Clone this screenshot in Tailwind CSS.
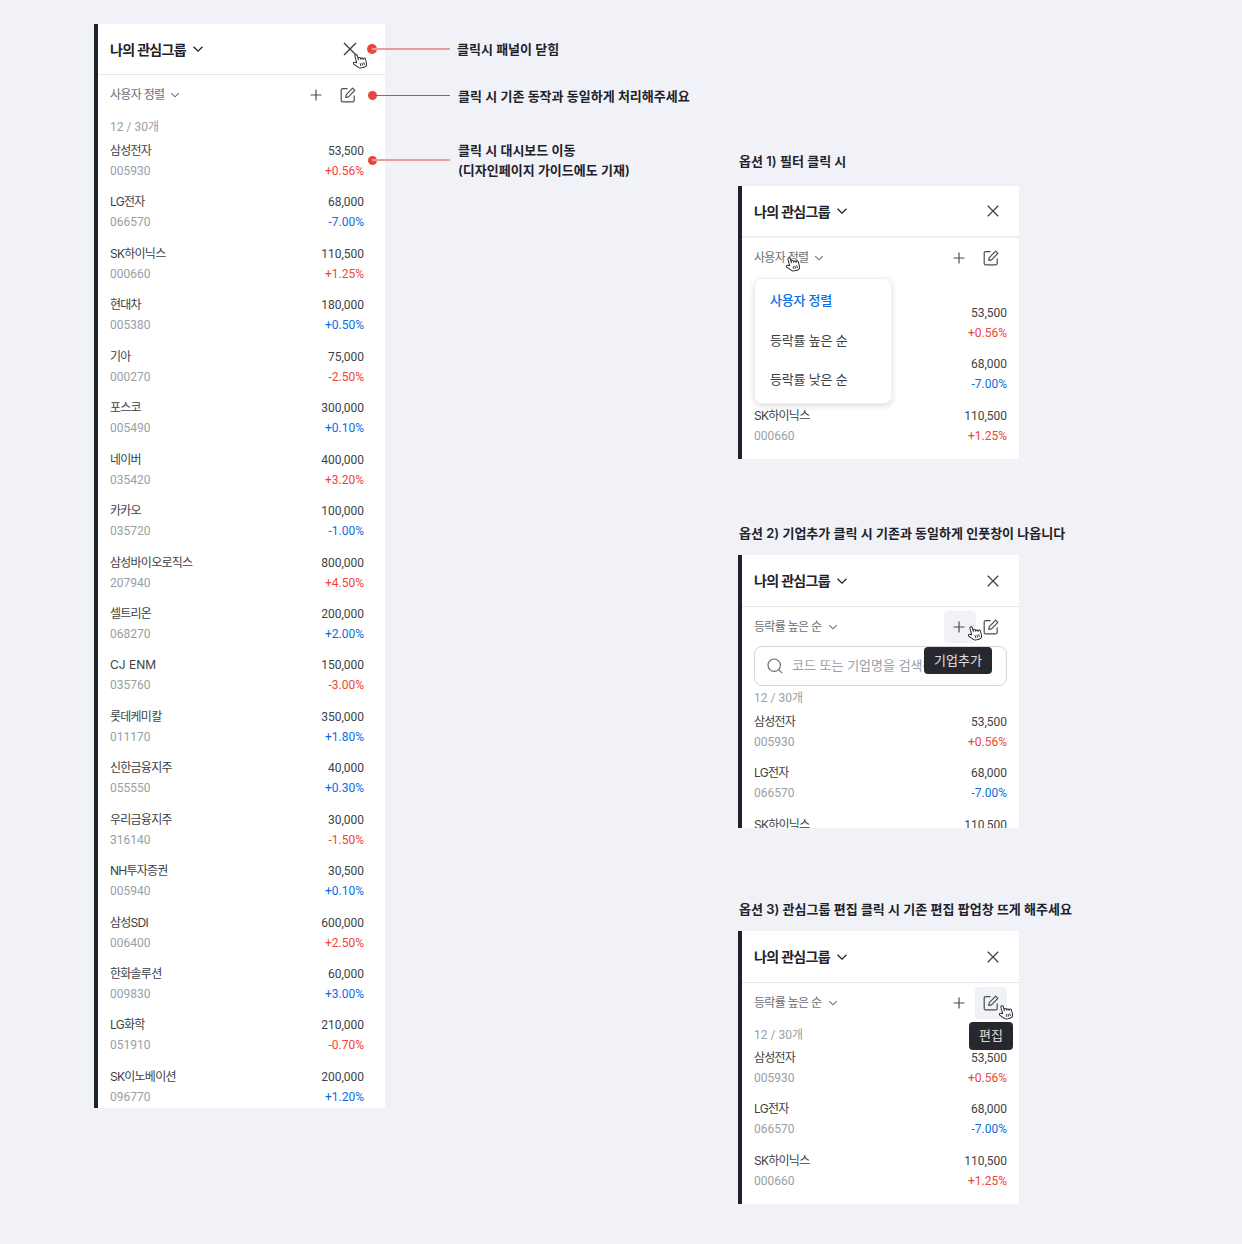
<!DOCTYPE html>
<html lang="ko">
<head>
<meta charset="UTF-8">
<title>나의 관심그룹</title>
<script src="https://cdn.jsdelivr.net/npm/@tailwindcss/browser@4"></script>
</head>
<body class="bg-[#f0f2f8] font-['Inter','Noto_Sans_CJK_KR',sans-serif] text-[#1f2229]">
<svg class="hidden">
  <symbol id="x" viewBox="0 0 16 16"><path d="M2 2L14 14M14 2L2 14" fill="none" stroke="currentColor" stroke-width="1.4"/></symbol>
  <symbol id="chev" viewBox="0 0 12 12"><path d="M1.5 3.8L6 8.2L10.5 3.8" fill="none" stroke="currentColor" stroke-width="1.3"/></symbol>
  <symbol id="plus" viewBox="0 0 12 12"><path d="M6 .5V11.5M.5 6H11.5" fill="none" stroke="currentColor" stroke-width="1.2"/></symbol>
  <symbol id="edit" viewBox="0 0 16 16"><path d="M7.5 1.7H2.4A1.2 1.2 0 0 0 1.2 2.9V13.6A1.2 1.2 0 0 0 2.4 14.8H13A1.2 1.2 0 0 0 14.2 13.6V8.5M5.8 10.3L6.3 7.6L12.6 1.2L14.8 3.4L8.5 9.8Z" fill="none" stroke="currentColor" stroke-width="1.2" stroke-linejoin="round"/></symbol>
  <symbol id="hand" viewBox="0 0 16 17"><path d="M4.6 9.5V2.4A1.3 1.3 0 0 1 7.2 2.4V7V6A1.3 1.3 0 0 1 9.8 6V7.2A1.2 1.2 0 0 1 12.2 7.2V8A1.2 1.2 0 0 1 14.6 8V12C14.6 14.6 13.2 16.2 11 16.2H8C6.6 16.2 5.8 15.6 4.8 14.4L1.2 10.2C.3 9 1.8 7.6 3 8.6Z" fill="#fff" stroke="#1f2229" stroke-width="1" stroke-linejoin="round"/><path d="M8 11V14M10 11V14M12 11V14" stroke="#1f2229" stroke-width=".9"/></symbol>
  <symbol id="search" viewBox="0 0 16 16"><circle cx="7.2" cy="7.2" r="6.2" fill="none" stroke="currentColor" stroke-width="1.2"/><path d="M11.7 11.7L15.2 15.2" stroke="currentColor" stroke-width="1.2"/></symbol>
</svg>

<div class="relative w-[1242px] h-[1244px] overflow-hidden">

  <!-- main panel -->
  <section class="absolute left-[94px] top-[24px] w-[291px] h-[1084px] bg-white border-l-4 border-[#1f2229] overflow-hidden">
    <header class="h-[51px] pl-3 pr-[27px] flex items-center justify-between border-b border-[#e4e6ec]">
      <div class="flex items-center gap-[6px]"><span class="text-[14px] font-semibold tracking-[-0.7px]">나의 관심그룹</span><svg class="size-3"><use href="#chev"/></svg></div>
      <svg class="size-4 text-[#3c3f46]"><use href="#x"/></svg>
    </header>
    <div class="h-[40px] pl-3 pr-[29px] flex items-center justify-between">
      <div class="flex items-center gap-[6px] text-[#6b6f78]"><span class="text-[12px] tracking-[-0.7px]">사용자 정렬</span><svg class="size-[10px]"><use href="#chev"/></svg></div>
      <div class="flex items-center gap-[18px] text-[#4a4d55]"><svg class="size-3"><use href="#plus"/></svg><svg class="size-4"><use href="#edit"/></svg></div>
    </div>
    <p class="pl-3 mt-[2px] h-[20px] leading-[20px] text-[12px] text-[#9a9ea6] font-['Roboto','Noto_Sans_CJK_KR',sans-serif]">12 / 30개</p>
    <ul data-rows="19" class="pl-3 pr-[21px] mt-[4px]"></ul>
  </section>

  <!-- annotations -->
  <svg class="absolute left-[352px] top-[53px] w-[15px] h-4 -rotate-[15deg]"><use href="#hand"/></svg>
  <div class="absolute left-[367px] top-[44px] w-[10px] h-[10px] rounded-full bg-[#e8473c]"></div>
  <div class="absolute left-[372px] top-[48px] w-[78px] h-[2px] bg-[#ef9b96]"></div>
  <p class="absolute left-[457px] top-[39px] leading-[20px] text-[13px] font-semibold">클릭시 패널이 닫힘</p>

  <div class="absolute left-[368px] top-[91px] w-[9px] h-[9px] rounded-full bg-[#e8473c]"></div>
  <div class="absolute left-[372px] top-[95px] w-[78px] h-px bg-[#d9483e]"></div>
  <p class="absolute left-[458px] top-[86px] leading-[20px] text-[13px] font-semibold">클릭 시 기존 동작과 동일하게 처리해주세요</p>

  <div class="absolute left-[368px] top-[156px] w-[9px] h-[9px] rounded-full bg-[#e8473c]"></div>
  <div class="absolute left-[372px] top-[159px] w-[78px] h-[2px] bg-[#ef9b96]"></div>
  <p class="absolute left-[458px] top-[140px] leading-[20px] text-[13px] font-semibold">클릭 시 대시보드 이동<br>(디자인페이지 가이드에도 기재)</p>

  <!-- option 1 -->
  <h2 class="absolute left-[739px] top-[151px] leading-[20px] text-[13px] font-semibold">옵션 1) 필터 클릭 시</h2>
  <section class="absolute left-[738px] top-[186px] w-[281px] h-[273px] bg-white border-l-4 border-[#1f2229] overflow-hidden">
    <header class="h-[52px] pl-3 pr-[19px] flex items-center justify-between border-b-2 border-[#eceef3]">
      <div class="flex items-center gap-[6px]"><span class="text-[14px] font-semibold tracking-[-0.7px]">나의 관심그룹</span><svg class="size-3"><use href="#chev"/></svg></div>
      <svg class="size-[14px] text-[#3c3f46]"><use href="#x"/></svg>
    </header>
    <div class="h-[40px] pl-3 pr-[20px] flex items-center justify-between">
      <div class="flex items-center gap-[6px] text-[#6b6f78]"><span class="text-[12px] tracking-[-0.7px]">사용자 정렬</span><svg class="size-[10px]"><use href="#chev"/></svg></div>
      <div class="flex items-center gap-[18px] text-[#4a4d55]"><svg class="size-3"><use href="#plus"/></svg><svg class="size-4"><use href="#edit"/></svg></div>
    </div>
    <p class="pl-3 mt-[5px] h-[20px] leading-[20px] text-[12px] text-[#9a9ea6] font-['Roboto','Noto_Sans_CJK_KR',sans-serif]">12 / 30개</p>
    <ul data-rows="3" class="pl-3 pr-[12px] -mt-[20px] pt-[20px]"></ul>
    <div class="absolute left-3 top-[92px] w-[138px] h-[126px] bg-white rounded-lg border border-[#f0f1f4] shadow-[0_2px_6px_rgba(0,0,0,0.14)] pl-[15px] pt-[2px] text-[13px] tracking-[-0.2px] leading-[39.5px] text-[#3c3f46]">
      <p class="text-[#0a6ee6] font-medium">사용자 정렬</p>
      <p>등락률 높은 순</p>
      <p>등락률 낮은 순</p>
    </div>
  </section>
  <svg class="absolute left-[785px] top-[256px] w-[15px] h-4 -rotate-[15deg]"><use href="#hand"/></svg>

  <!-- option 2 -->
  <h2 class="absolute left-[739px] top-[523px] leading-[20px] text-[13px] font-semibold">옵션 2) 기업추가 클릭 시 기존과 동일하게 인풋창이 나옵니다</h2>
  <section class="absolute left-[738px] top-[555px] w-[281px] h-[273px] bg-white border-l-4 border-[#1f2229] overflow-hidden">
    <header class="h-[52px] pl-3 pr-[19px] flex items-center justify-between border-b border-[#e4e6ec]">
      <div class="flex items-center gap-[6px]"><span class="text-[14px] font-semibold tracking-[-0.7px]">나의 관심그룹</span><svg class="size-3"><use href="#chev"/></svg></div>
      <svg class="size-[14px] text-[#3c3f46]"><use href="#x"/></svg>
    </header>
    <div class="h-[40px] pl-3 pr-[20px] flex items-center justify-between">
      <div class="flex items-center gap-[7px] text-[#6b6f78]"><span class="text-[12px] tracking-[-0.7px]">등락률 높은 순</span><svg class="size-[10px]"><use href="#chev"/></svg></div>
      <div class="relative flex items-center gap-[18px] text-[#4a4d55]"><span class="absolute -left-[9px] -top-[8px] size-8 rounded bg-[#f0f2f8]"></span><svg class="relative size-3"><use href="#plus"/></svg><svg class="size-4"><use href="#edit"/></svg></div>
    </div>
    <div class="mx-3 -mt-px h-[40px] flex items-center gap-[9px] pl-3 rounded-lg border border-[#d4d6dc] text-[#9a9ea6] text-[13px] overflow-hidden whitespace-nowrap"><svg class="size-4 shrink-0 text-[#6b6f78]"><use href="#search"/></svg><span>코드 또는 기업명을 검색해주세요</span></div>
    <p class="pl-3 mt-[2px] h-[20px] leading-[20px] text-[12px] text-[#9a9ea6] font-['Roboto','Noto_Sans_CJK_KR',sans-serif]">12 / 30개</p>
    <ul data-rows="3" class="pl-3 pr-[12px] mt-[4px]"></ul>
  </section>
  <div class="absolute left-[924px] top-[647px] w-[68px] h-[27px] rounded bg-[#26282e] text-white/85 text-[13px] text-center leading-[26px]">기업추가</div>
  <svg class="absolute left-[967px] top-[625px] w-[15px] h-4 -rotate-[15deg]"><use href="#hand"/></svg>

  <!-- option 3 -->
  <h2 class="absolute left-[739px] top-[899px] leading-[20px] text-[13px] font-semibold">옵션 3) 관심그룹 편집 클릭 시 기존 편집 팝업창 뜨게 해주세요</h2>
  <section class="absolute left-[738px] top-[931px] w-[281px] h-[273px] bg-white border-l-4 border-[#1f2229] overflow-hidden">
    <header class="h-[52px] pl-3 pr-[19px] flex items-center justify-between border-b border-[#e4e6ec]">
      <div class="flex items-center gap-[6px]"><span class="text-[14px] font-semibold tracking-[-0.7px]">나의 관심그룹</span><svg class="size-3"><use href="#chev"/></svg></div>
      <svg class="size-[14px] text-[#3c3f46]"><use href="#x"/></svg>
    </header>
    <div class="h-[40px] pl-3 pr-[20px] flex items-center justify-between">
      <div class="flex items-center gap-[7px] text-[#6b6f78]"><span class="text-[12px] tracking-[-0.7px]">등락률 높은 순</span><svg class="size-[10px]"><use href="#chev"/></svg></div>
      <div class="relative flex items-center gap-[18px] text-[#4a4d55]"><span class="absolute -right-[8px] -top-[8px] size-8 rounded bg-[#f0f2f8]"></span><svg class="size-3"><use href="#plus"/></svg><svg class="relative size-4"><use href="#edit"/></svg></div>
    </div>
    <p class="pl-3 mt-[2px] h-[20px] leading-[20px] text-[12px] text-[#9a9ea6] font-['Roboto','Noto_Sans_CJK_KR',sans-serif]">12 / 30개</p>
    <ul data-rows="3" class="pl-3 pr-[12px] mt-[3px]"></ul>
  </section>
  <div class="absolute left-[969px] top-[1022px] w-[44px] h-[28px] rounded bg-[#26282e] text-white/85 text-[13px] text-center leading-[27px]">편집</div>
  <svg class="absolute left-[998px] top-[1004px] w-[15px] h-4 -rotate-[15deg]"><use href="#hand"/></svg>
</div>

<script>
  const red = 'text-[#f04438]', blue = 'text-[#0a6ee6]';
  const rows = [
    ['삼성전자','005930','53,500','+0.56%',red],
    ['LG전자','066570','68,000','-7.00%',blue],
    ['SK하이닉스','000660','110,500','+1.25%',red],
    ['현대차','005380','180,000','+0.50%',blue],
    ['기아','000270','75,000','-2.50%',red],
    ['포스코','005490','300,000','+0.10%',blue],
    ['네이버','035420','400,000','+3.20%',red],
    ['카카오','035720','100,000','-1.00%',blue],
    ['삼성바이오로직스','207940','800,000','+4.50%',red],
    ['셀트리온','068270','200,000','+2.00%',blue],
    ['CJ ENM','035760','150,000','-3.00%',red],
    ['롯데케미칼','011170','350,000','+1.80%',blue],
    ['신한금융지주','055550','40,000','+0.30%',blue],
    ['우리금융지주','316140','30,000','-1.50%',red],
    ['NH투자증권','005940','30,500','+0.10%',blue],
    ['삼성SDI','006400','600,000','+2.50%',red],
    ['한화솔루션','009830','60,000','+3.00%',blue],
    ['LG화학','051910','210,000','-0.70%',red],
    ['SK이노베이션','096770','200,000','+1.20%',blue],
  ];
  document.querySelectorAll('ul[data-rows]').forEach(ul => {
    ul.innerHTML = rows.slice(0, +ul.dataset.rows).map(r => `
      <li class="h-[51.44px] flex justify-between text-[12px] leading-[20px]">
        <div><p class="text-[#3c3f46] ${r[0] === 'CJ ENM' ? 'tracking-normal' : 'tracking-[-0.75px]'}">${r[0]}</p><p class="text-[#9a9ea6] font-['Roboto',sans-serif]">${r[1]}</p></div>
        <div class="text-right font-['Roboto',sans-serif]"><p class="text-[#3c3f46]">${r[2]}</p><p class="${r[4]}">${r[3]}</p></div>
      </li>`).join('');
  });
</script>
</body>
</html>
